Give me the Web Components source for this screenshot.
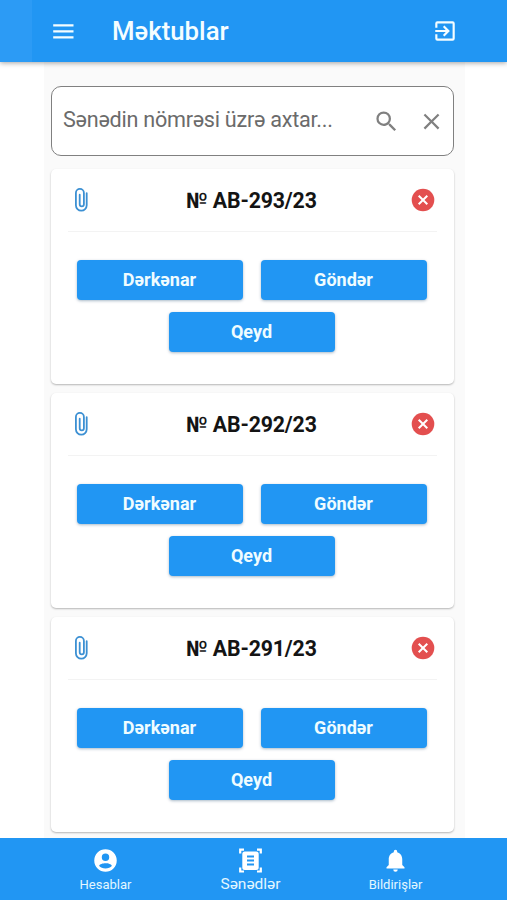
<!DOCTYPE html>
<html lang="az">
<head>
<meta charset="utf-8">
<title>Məktublar</title>
<style>
html,body{margin:0;height:100%;overflow:hidden;background:#fff;font-family:Roboto,"Noto Sans",sans-serif}
</style>
</head>
<body>
<letters-app></letters-app>
<script>
const define = (name, html) => {
  const tpl = document.createElement('template');
  tpl.innerHTML = html;
  customElements.define(name, class extends HTMLElement {
    constructor() {
      super();
      this.attachShadow({ mode: 'open' }).append(tpl.content.cloneNode(true));
    }
  });
};

define('app-header', `
<style>
:host{display:flex;align-items:center;height:62px;box-sizing:border-box;padding:0 49px 0 51px;background:linear-gradient(90deg,#2c9bf5 32px,#2196f3 32px);color:#f4fdff;box-shadow:0 1px 5px rgba(0,0,0,.36);position:relative;z-index:1;flex:none}
h1{font-size:25.8px;line-height:30px;font-weight:500;margin:0 auto 0 36px;white-space:nowrap}
svg{display:block;flex:none;fill:currentColor}
</style>
<svg width="25" height="25" viewBox="0 0 25 25"><path d="M2.2 5.2h20.3v2.3H2.2zM2.2 11.2h20.3v2.3H2.2zM2.2 17.2h20.3v2.3H2.2z"/></svg>
<h1><slot></slot></h1>
<svg width="26" height="26" viewBox="0 0 24 24"><path d="M10.09 15.59 11.5 17l5-5-5-5-1.41 1.41L12.67 11H3v2h9.67l-2.58 2.59zM19 3H5a2 2 0 0 0-2 2v4h2V5h14v14H5v-4H3v4a2 2 0 0 0 2 2h14a2 2 0 0 0 2-2V5a2 2 0 0 0-2-2z"/></svg>
`);

define('search-field', `
<style>
:host{display:flex;align-items:center;height:70px;box-sizing:border-box;border:1px solid #808080;border-radius:10px;background:#fff;padding:0 8px 0 11px;color:#6b6b6b;flex:none}
span{font-size:21.6px;letter-spacing:-.25px;line-height:28px;white-space:nowrap;margin-right:auto;padding-bottom:3px}
svg{display:block;fill:#808080;flex:none}
.x{margin-left:18px}
</style>
<span><slot></slot></span>
<svg width="27" height="27" viewBox="0 0 24 24"><path d="M15.5 14h-.79l-.28-.27A6.47 6.47 0 0 0 16 9.5 6.5 6.5 0 1 0 9.5 16c1.61 0 3.09-.59 4.23-1.57l.27.28v.79l5 4.99L20.49 19l-4.99-5zm-6 0a4.5 4.5 0 1 1 0-9 4.5 4.5 0 0 1 0 9z"/></svg>
<svg class="x" width="27" height="27" viewBox="0 0 24 24"><path d="M19 6.41 17.59 5 12 10.59 6.41 5 5 6.41 10.59 12 5 17.59 6.41 19 12 13.41 17.59 19 19 17.59 13.41 12z"/></svg>
`);

define('action-button', `
<style>
:host{display:flex;align-items:center;justify-content:center;width:166px;height:40px;border-radius:4px;background:#2196f3;color:#effcff;font-size:18px;line-height:22px;font-weight:700;box-shadow:0 1px 3px rgba(0,50,90,.34)}
</style>
<slot></slot>
`);

define('letter-card', `
<style>
:host{display:block;height:215px;box-sizing:border-box;border-radius:5px;background:#fff;box-shadow:0 1px 2px rgba(0,0,0,.28);padding:0 17px;flex:none}
header{display:flex;align-items:center;height:63px;box-sizing:border-box;border-bottom:1px solid #f3f3f3;padding:0 2px 0 5px}
h2{flex:1;text-align:center;margin:0;padding:1px 0 0 1px;font-size:21.3px;letter-spacing:-.15px;line-height:26px;font-weight:700;color:#141414;white-space:nowrap}
svg{display:block;flex:none}
.actions{display:flex;flex-wrap:wrap;justify-content:center;column-gap:18px;row-gap:12px;padding:28px 2px 0 0}
</style>
<header>
<svg width="18" height="28" viewBox="0 0 18 28" fill="none" stroke="#3c90d3" stroke-width="1.8" stroke-linecap="round"><path d="M13.7 7.2v12a5.4 5.4 0 0 1-10.8 0V6.9a4 4 0 0 1 8 0v11.400a2.100 2.100 0 0 1-4.200 0V8.700"/></svg>
<h2><slot></slot></h2>
<svg width="24" height="24" viewBox="0 0 24 24"><circle cx="12" cy="12" r="11.3" fill="#e34f4f"/><path d="m7.7 7.7 8.6 8.6m0-8.6-8.6 8.6" stroke="#fff" stroke-width="2"/></svg>
</header>
<div class="actions">
<action-button>Dərkənar</action-button>
<action-button>Göndər</action-button>
<action-button>Qeyd</action-button>
</div>
`);

define('nav-item', `
<style>
:host{display:flex;flex-direction:column;align-items:center;width:145px;color:#e3f6ff;font-size:13px;line-height:18px;padding-top:9px}
:host([active]){font-size:15.5px}
:host([active]) span{margin-top:-1px}
::slotted(svg){display:block;width:27px;height:27px;margin-bottom:2px}
</style>
<slot name="icon"></slot><span><slot></slot></span>
`);

define('bottom-nav', `
<style>
:host{display:flex;justify-content:center;height:62px;box-sizing:border-box;background:#2196f3;position:relative;z-index:1;flex:none;padding-right:6px}
</style>
<nav-item><svg slot="icon" viewBox="0 0 24 24" fill="#fff"><path d="M12 2a10 10 0 1 0 0 20 10 10 0 0 0 0-20zm0 3.800a3.300 3.300 0 1 1 0 6.600 3.300 3.300 0 0 1 0-6.600zm0 13.200c-2.400 0-4.500-.8-5.600-2.100 0-1.700 3.600-2.400 5.600-2.400s5.600.7 5.600 2.400c-1.100 1.300-3.200 2.100-5.600 2.100z"/></svg>Hesablar</nav-item>
<nav-item active><svg slot="icon" viewBox="0 0 27 27"><path d="M3.200 6.500V2.700H7M20 2.700h3.800v3.800M23.800 20.500v4H20M7 24.500H3.200v-4" fill="none" stroke="#fff" stroke-width="2.200"/><rect x="5.300" y="4.600" width="16.400" height="18.400" rx="2.500" fill="#fff"/><path d="M10 9.600h7M10 13.600h7M10 17.600h7" stroke="#2196f3" stroke-width="2"/></svg>Sənədlər</nav-item>
<nav-item><svg slot="icon" viewBox="0 0 24 24" fill="#fff"><path d="M12 22a2 2 0 0 0 2-2h-4a2 2 0 0 0 2 2zm6-6v-5c0-3.070-1.640-5.640-4.500-6.320V4a1.500 1.500 0 0 0-3 0v.68C7.630 5.360 6 7.920 6 11v5l-2 2v1h16v-1l-2-2z"/></svg>Bildirişlər</nav-item>
`);

define('letters-app', `
<style>
:host{display:flex;flex-direction:column;height:900px;width:507px;overflow:hidden}
main{flex:1;min-height:0;overflow:hidden;background:#fff;display:flex;justify-content:flex-start;padding-left:44px}
section{width:403px;padding:24px 11px 0 7px;background:#fafafa;display:flex;flex-direction:column}
search-field{margin-bottom:13px}
letter-card{margin-bottom:9px}
</style>
<app-header>Məktublar</app-header>
<main><section>
<search-field>Sənədin nömrəsi üzrə axtar...</search-field>
<letter-card>№ AB-293/23</letter-card>
<letter-card>№ AB-292/23</letter-card>
<letter-card>№ AB-291/23</letter-card>
</section></main>
<bottom-nav></bottom-nav>
`);
</script>
</body>
</html>
